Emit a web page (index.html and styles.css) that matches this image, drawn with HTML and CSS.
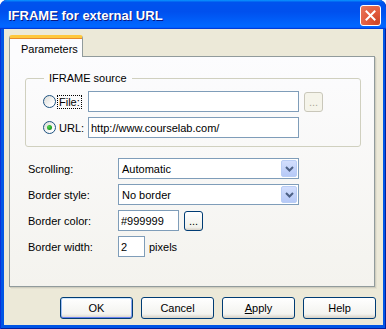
FILE: index.html
```html
<!DOCTYPE html>
<html lang="en">
<head>
    <meta charset="UTF-8">
    <title>IFRAME for external URL</title>
    <link rel="stylesheet" href="styles.css">
</head>
<body>
    <div class="window">
        <div class="titlebar">
            <span class="title">IFRAME for external URL</span>
            <button class="close-btn" aria-label="Close">
                <svg width="11" height="11" viewBox="0 0 11 11"><path d="M1.5 1.5 L9.5 9.5 M9.5 1.5 L1.5 9.5" stroke="#fff" stroke-width="2" stroke-linecap="square"/></svg>
            </button>
        </div>

        <div class="client">
            <div class="tabstrip">
                <div class="tab">Parameters</div>
            </div>

            <div class="panel">
                <fieldset class="group">
                    <legend>IFRAME source</legend>
                    <div class="src-row">
                        <label class="radio-opt">
                            <span class="radio"></span>
                            <span class="focus-label">File:</span>
                        </label>
                        <input type="text" class="text-input src-input">
                        <button class="dots-btn disabled">...</button>
                    </div>
                    <div class="src-row">
                        <label class="radio-opt">
                            <span class="radio checked"></span>
                            <span class="plain-label">URL:</span>
                        </label>
                        <input type="text" class="text-input src-input" value="http://www.courselab.com/">
                    </div>
                </fieldset>

                <div class="field-row first">
                    <span class="field-label">Scrolling:</span>
                    <div class="combo">
                        <span class="combo-value">Automatic</span>
                        <span class="combo-arrow">
                            <svg width="9" height="6" viewBox="0 0 9 6"><path d="M1 1 L4.5 4.5 L8 1" fill="none" stroke="#4d6185" stroke-width="2"/></svg>
                        </span>
                    </div>
                </div>

                <div class="field-row">
                    <span class="field-label">Border style:</span>
                    <div class="combo">
                        <span class="combo-value">No border</span>
                        <span class="combo-arrow">
                            <svg width="9" height="6" viewBox="0 0 9 6"><path d="M1 1 L4.5 4.5 L8 1" fill="none" stroke="#4d6185" stroke-width="2"/></svg>
                        </span>
                    </div>
                </div>

                <div class="field-row">
                    <span class="field-label">Border color:</span>
                    <input type="text" class="text-input color-input" value="#999999">
                    <button class="dots-btn">...</button>
                </div>

                <div class="field-row">
                    <span class="field-label">Border width:</span>
                    <input type="text" class="text-input width-input" value="2">
                    <span class="unit">pixels</span>
                </div>
            </div>

            <div class="button-bar">
                <button class="btn default">OK</button>
                <button class="btn">Cancel</button>
                <button class="btn"><u>A</u>pply</button>
                <button class="btn">Help</button>
            </div>
        </div>
    </div>
</body>
</html>
```

FILE: styles.css
```css
* {
    margin: 0;
    padding: 0;
    box-sizing: border-box;
}

body {
    background: #ffffff;
    font-family: "Liberation Sans", Arial, sans-serif;
    font-size: 11px;
    color: #000000;
}

.window {
    width: 386px;
    height: 329px;
    display: flex;
    flex-direction: column;
    background: #0055e5;
    border-radius: 7px 7px 0 0;
    box-shadow: inset 1px 0 0 #0831d9, inset -1px 0 0 #001ea0, inset 0 -1px 0 #001ea0;
    overflow: hidden;
}

/* title bar */
.titlebar {
    height: 29px;
    display: flex;
    align-items: center;
    justify-content: space-between;
    padding: 0 5px 0 8px;
    background: linear-gradient(180deg, #0997ff, #0053ee 8%, #0050ee 40%, #0066ff 88%, #0066ff 93%, #005bff 95%, #003dd7 96%, #003dd7);
    border-radius: 7px 7px 0 0;
}

.title {
    color: #ffffff;
    font-weight: bold;
    font-size: 13px;
    text-shadow: 1px 1px 0 #0a1883;
    padding-top: 2px;
}

.close-btn {
    width: 21px;
    height: 21px;
    border: 1px solid #ffffff;
    border-radius: 3px;
    background: radial-gradient(circle at 85% 85%, #cc4628 0%, #e25a3c 45%, #e77a5d 100%);
    display: flex;
    align-items: center;
    justify-content: center;
    margin-top: 2px;
}

/* client area */
.client {
    flex: 1;
    margin: 0 3px 4px 4px;
    background: #ece9d8;
    display: flex;
    flex-direction: column;
}

.tabstrip {
    margin-top: 6px;
    padding-left: 5px;
    display: flex;
    position: relative;
    z-index: 1;
    margin-bottom: -1px;
}

.tab {
    width: 74px;
    height: 22px;
    padding: 5px 0 0 11px;
    background: #fcfcfe;
    border: 1px solid #919b9c;
    border-bottom: none;
    border-top: 3px solid #ffc83c;
    border-radius: 3px 3px 0 0;
    box-shadow: inset 0 1px 0 #e68b2c;
    line-height: 13px;
}

.panel {
    margin-left: 5px;
    width: 366px;
    height: 231px;
    border: 1px solid #919b9c;
    background: linear-gradient(180deg, #fcfcfe, #f4f3ee);
    box-shadow: 1px 1px 0 #d0cebf, 2px 2px 0 #e3e0d0;
}

/* group box */
.group {
    margin: 14px 0 0 15px;
    width: 336px;
    border: 1px solid #d0d0bf;
    border-radius: 3px;
    padding: 6px 0 8px 17px;
}

.group legend {
    margin-left: 1px;
    padding: 0 5px;
    color: #000000;
    font-size: 11px;
    line-height: 14px;
}

.src-row {
    display: flex;
    align-items: center;
    height: 21px;
}

.src-row + .src-row {
    margin-top: 5px;
}

.radio-opt {
    width: 45px;
    display: flex;
    align-items: center;
}

.radio {
    width: 13px;
    height: 13px;
    border: 1px solid #1c5180;
    border-radius: 50%;
    background: linear-gradient(135deg, #dcdcd7, #ffffff 80%);
    display: flex;
    align-items: center;
    justify-content: center;
}

.radio.checked::after {
    content: "";
    width: 5px;
    height: 5px;
    border-radius: 50%;
    background: radial-gradient(circle at 35% 35%, #55d551, #21a121 60%, #1a8a1a);
}

.focus-label {
    margin-left: 1px;
    padding: 0 1px;
    border: 1px dotted #000000;
    line-height: 12px;
}

.plain-label {
    margin-left: 3px;
}

.text-input {
    height: 21px;
    border: 1px solid #7f9db9;
    background: #ffffff;
    font-family: "Liberation Sans", Arial, sans-serif;
    font-size: 11px;
    padding: 0 2px;
    color: #000000;
    outline: none;
}

.src-input {
    width: 211px;
}

.dots-btn {
    width: 19px;
    height: 20px;
    margin-left: 5px;
    border: 1px solid #003c74;
    border-radius: 3px;
    background: linear-gradient(180deg, #ffffff, #f0f0ea 85%, #d6d0c5);
    font-family: "Liberation Sans", Arial, sans-serif;
    font-size: 11px;
    color: #000000;
    line-height: 14px;
}

.dots-btn.disabled {
    border-color: #c9c7ba;
    background: #f5f4ea;
    color: #aca899;
}

/* property rows */
.field-row {
    display: flex;
    align-items: center;
    height: 21px;
    margin: 5px 0 0 18px;
}

.field-row.first {
    margin-top: 11px;
}

.field-label {
    width: 90px;
}

.combo {
    width: 181px;
    height: 21px;
    border: 1px solid #7f9db9;
    background: #ffffff;
    display: flex;
    align-items: center;
    justify-content: space-between;
    padding: 1px 1px 1px 3px;
}

.combo-arrow {
    width: 16px;
    height: 17px;
    border: 1px solid #b9cdf5;
    border-radius: 2px;
    background: linear-gradient(180deg, #d2defd, #b6c9f7);
    display: flex;
    align-items: center;
    justify-content: center;
}

.color-input {
    width: 61px;
}

.width-input {
    width: 27px;
}

.unit {
    margin-left: 4px;
}

/* dialog buttons */
.button-bar {
    display: flex;
    justify-content: flex-end;
    gap: 8px;
    margin-top: 10px;
    padding-right: 7px;
}

.btn {
    width: 73px;
    height: 22px;
    border: 1px solid #003c74;
    border-radius: 3px;
    background: linear-gradient(180deg, #ffffff, #f3f3ef 80%, #d6d0c5);
    font-family: "Liberation Sans", Arial, sans-serif;
    font-size: 11px;
    color: #000000;
}

.btn.default {
    box-shadow: inset 0 1px 0 #cee7ff, inset 0 -1px 0 #6982ee, inset 1px 0 0 #a0c0f5, inset -1px 0 0 #88a4f0;
}
```
